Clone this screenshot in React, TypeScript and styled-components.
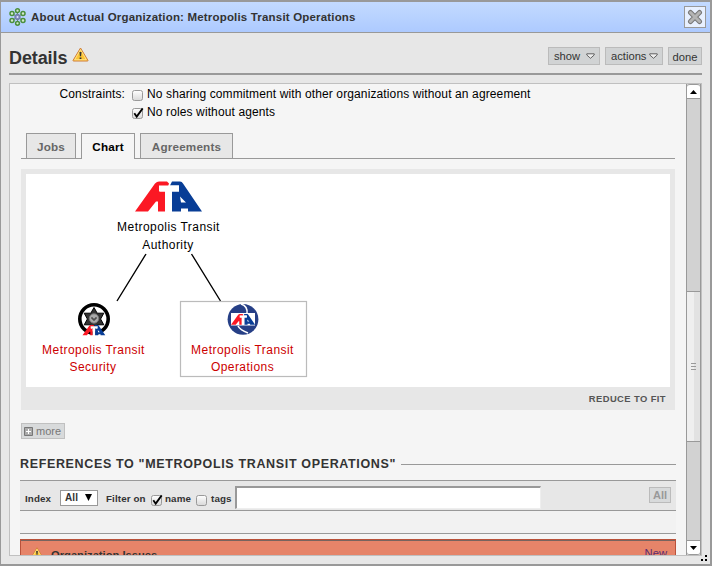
import React from "react";
import styled, { createGlobalStyle, css } from "styled-components";

const Global = createGlobalStyle`
  * { box-sizing: border-box; }
  body { margin: 0; font-family: "Liberation Sans", Arial, sans-serif; font-size: 11.5px; color: #333; }
`;

const Dialog = styled.div`
  width: 712px; height: 566px; background: #e7e7e7; overflow: hidden;
  border: solid #999; border-width: 2px 2px 2px 1px;
  display: flex; flex-direction: column; position: relative;
`;
const TitleBar = styled.header`
  height: 31px; flex: none; display: flex; align-items: center;
  padding: 0 4px 0 8px; gap: 5px; border-bottom: 1px solid #999;
  background: linear-gradient(#c3daff, #adcaff);
`;
const Title = styled.h1`
  margin: 0; flex: 1; font-size: 11.5px; line-height: 14px; letter-spacing: 0.18px; white-space: nowrap; color: #333;
`;
const CloseButton = styled.button`
  width: 22px; height: 22px; padding: 0; border: 1px solid #999; background: #e8f0ff;
  display: grid; place-items: center;
`;
const Heading = styled.div`
  height: 42px; flex: none; margin: 0 8px 0 8px; border-bottom: 2px solid #999;
  display: flex; align-items: flex-start; padding-top: 14px;
`;
const PageTitle = styled.h2`
  margin: 0; font-size: 18px; line-height: 22px; width: 63px; letter-spacing: -0.1px;
`;
const Menu = styled.div`margin-left: auto; display: flex; gap: 5px;`;
const MenuButton = styled.button<{ $w: number }>`
  width: ${p => p.$w}px; height: 18px; padding: 0 4px 0 5px; border: 1px solid #bbb; background: #d1d3d4;
  font: 11.2px/16px "Liberation Sans", sans-serif; color: #333;
  display: flex; align-items: center; justify-content: space-between; white-space: nowrap;
`;
const DoneButton = styled(MenuButton)`justify-content: center; padding: 1px 0 0;`;
const Panel = styled.div`
  margin: 8px 8px 0 8px; height: 473px; flex: none; border: 1px solid #c0c0c0; background: #f5f5f5;
  display: flex;
`;
const Content = styled.main`flex: 1; min-width: 0; height: 471px; overflow: hidden; padding: 1px 9px 0 10px;`;

const Constraints = styled.div`
  display: grid; grid-template-columns: 105px 13px 1fr; column-gap: 7px; grid-auto-rows: 18px;
  color: #000; font-size: 12px; line-height: 18px; letter-spacing: 0.12px;
  margin-bottom: 12px; white-space: nowrap;
`;
const Label = styled.span`text-align: right;`;
const RowText = styled.span`margin-left: -5px;`;
const Box = styled.span<{ $mt?: number }>`
  display: block; width: 13px; height: 13px; flex: none; margin-top: ${p => p.$mt ?? 0}px;
  svg { display: block; overflow: visible; }
`;

const Tabs = styled.nav`
  margin-left: 1px; width: 654px; height: 26px; border-bottom: 1px solid #999;
  display: flex; gap: 5px; padding-left: 5px;
`;
const Tab = styled.div<{ $w: number; $active?: boolean }>`
  width: ${p => p.$w}px; height: 25px; border: 1px solid #999; border-bottom: 0;
  background: #e7e7e7; color: #666; font-weight: bold; font-size: 11.7px; line-height: 25px; text-align: center;
  letter-spacing: 0.18px;
  ${p => p.$active && css`height: 26px; background: #f5f5f5; color: #000;`}
`;
const ChartFrame = styled.section`
  margin: 10px 0 0 1px; width: 654px; height: 241px; padding: 5px; background: #e7e7e7;
  svg { display: block; background: #fff; }
`;
const Reduce = styled.div`
  text-align: right; font-weight: bold; font-size: 9.4px; line-height: 12px; margin-top: 6px; padding-right: 4px; color: #555;
  letter-spacing: 0.42px;
`;
const NodeText = styled.text<{ $red?: boolean }>`
  font: 12px "Liberation Sans", sans-serif; letter-spacing: 0.45px; text-anchor: middle;
  fill: ${p => (p.$red ? "#c00" : "#000")};
`;
const More = styled.button`
  display: flex; align-items: center; gap: 3px; margin: 13px 0 0 1px; width: 44px; height: 16px; padding: 0 2px;
  border: 1px solid #c0c0c0; background: #d8dadb; color: #777; font: 11px/14px "Liberation Sans", sans-serif;
`;
const Section = styled.h3`
  margin: 16px 0 0; height: 18px; width: 656px; display: flex; align-items: center; gap: 5px; white-space: nowrap;
  font-size: 12.5px; letter-spacing: 0.65px; line-height: 18px;
  &::after { content: ""; flex: 1; height: 1px; background: #999; }
`;
const Filter = styled.div`
  margin-top: 7px; width: 656px; height: 31px; border: solid #999; border-width: 1px 0; background: #e7e7e7;
  display: flex; align-items: flex-start; font-size: 9.8px; font-weight: bold; line-height: 12px; letter-spacing: 0.12px;
  padding: 0 5px;
`;
const FilterText = styled.span<{ $w: number; $indent?: number }>`
  width: ${p => p.$w}px; padding-left: ${p => p.$indent ?? 0}px; margin-top: 12px; flex: none; white-space: nowrap;
`;
const Select = styled.div`
  width: 38px; height: 16px; margin: 9px 8px 0 0; border: 1px solid #999; background: #fff; flex: none;
  display: flex; align-items: center; justify-content: space-between; padding: 0 5px 0 4px; font-size: 10px; color: #333;
  svg { margin-top: -2px; }
`;
const Field = styled.input`
  width: 306px; height: 23px; margin-top: 5px; flex: none; background: #fff; outline: 0;
  border: solid; border-width: 2px 1px 1px 2px; border-color: #999 #eee #eee #999;
`;
const AllButton = styled.button`
  margin: 6px 0 0 auto; width: 22px; height: 16px; padding: 0; border: 1px solid #bbb; background: #d8dadb;
  color: #999; font: bold 11px/14px "Liberation Sans", sans-serif;
`;
const Spacer = styled.div`width: 656px; height: 23px; background: #f2f2f2; border-bottom: 1px solid #999;`;
const Issues = styled.div`
  margin-top: 5px; width: 656px; height: 40px; border: 1px solid #b9523b; background: #e68469;
  box-shadow: inset 0 1px #77645f; display: flex; align-items: flex-start; padding: 7px 8px 0 9px;
  font-size: 11.2px; font-weight: bold;
  a { margin-left: auto; color: #5a2a70; font-weight: normal; }
`;
const IssueName = styled.span`margin: 1px 0 0 7px; line-height: 14px;`;

const Scrollbar = styled.div`
  width: 15px; height: 471px; background: #d2d2d2; border: solid #999; border-width: 0 1px; display: flex; flex-direction: column;
`;
const ScrollEnd = styled.div<{ $bottom?: boolean }>`
  height: 15px; background: #fff; display: grid; place-items: center; flex: none;
  border: solid #999; border-width: 1px 0;
  border-radius: ${p => (p.$bottom ? "0 0 3px 3px" : "3px 3px 0 0")};
`;
const Track = styled.div`flex: 1; padding-top: 192px;`;
const Thumb = styled.div`
  height: 151px; border: solid #999; border-width: 1px 0; background: linear-gradient(90deg, #efefef 54%, #e2e2e2 54%);
  display: flex; flex-direction: column; align-items: center; justify-content: center; gap: 2px;
`;
const Grip = styled.i`width: 5px; height: 1px; background: #999;`;
const Resizer = styled.svg`position: absolute; right: 3px; bottom: 3px;`;

const Check = ({ on, mt }: { on?: boolean; mt?: number }) => (
  <Box $mt={mt}>
    <svg width="13" height="13">
      <defs>
        <linearGradient id="cb" x2="0" y2="1"><stop stopColor="#fff" /><stop offset="1" stopColor="#d8d8d8" /></linearGradient>
      </defs>
      <rect x=".5" y="1.5" width="10" height="10" rx="2" fill="url(#cb)" stroke="#999" />
      {on && <path d="M2.3 6.3L4.7 9.6L10.7 1.4" fill="none" stroke="#000" strokeWidth="1.8" />}
    </svg>
  </Box>
);
const Caret = () => (
  <svg width="9" height="6"><path d="M.8 .8H8.2V2L4.5 5.3L.8 2Z" fill="#eee" stroke="#555" strokeWidth=".9" /></svg>
);
const Warning = ({ w = 17 }: { w?: number }) => (
  <svg width={w} height={w * 15 / 17} viewBox="0 0 17 15">
    <path d="M8.5 1L16 13.5Q16 14 15.5 14H1.5Q1 14 1 13.5Z" fill="#ffd45a" stroke="#cf7b35" strokeLinejoin="round" />
    <path d="M8.5 2.7L14.2 12.7H2.8Z" fill="#fbc534" stroke="#ffe99a" strokeWidth=".7" />
    <path d="M7.5 5h2l-.4 4.3h-1.2zM7.6 10.4h1.8v1.6H7.6z" fill="#333" />
  </svg>
);
const AppIcon = () => (
  <svg width="17" height="18" viewBox="0 0 17 18">
    <g stroke="#6a7f78" strokeWidth="1"><path d="M8.5 2.5V15.5M3 5.5L14 12.5M14 5.5L3 12.5" /></g>
    <g fill="#d3e8cf" stroke="#4a8f3c" strokeWidth="1.5">
      <circle cx="8.5" cy="2.7" r="1.9" /><circle cx="3" cy="5.6" r="2" /><circle cx="14" cy="5.6" r="2" />
      <circle cx="3" cy="12.4" r="2" /><circle cx="14" cy="12.4" r="2" /><circle cx="8.5" cy="15.3" r="1.9" />
    </g>
    <circle cx="8.5" cy="9" r="2.7" fill="#8088c0" stroke="#6d7fa0" />
    <circle cx="8.5" cy="9" r="1" fill="#e4e8ff" />
  </svg>
);
const TransitMark = () => (
  <>
    <path fill="#fb1824" d="M0 30L20 2Q22 0 24 0H32L34 2L33 5H25V10H30V30H23V20H21L13 30Z" />
    <path fill="#083d96" d="M37 0H45Q47 0 48 2L67 30H53V27H46V30H37V10H44V4H35Z" />
    <path fill="#fff" d="M24 4H44V10H37V30H30V10H24ZM45 15L51 21H46Z" />
  </>
);

export default function App() {
  return (
    <>
      <Global />
      <Dialog>
        <TitleBar>
          <AppIcon />
          <Title>About Actual Organization: Metropolis Transit Operations</Title>
          <CloseButton aria-label="Close">
            <svg width="16" height="16">
              <path d="M3.5 3.5L12.5 12.5M12.5 3.5L3.5 12.5" stroke="#777" strokeWidth="5" strokeLinecap="round" />
              <path d="M3.5 3.5L12.5 12.5M12.5 3.5L3.5 12.5" stroke="#b4b4b4" strokeWidth="3" strokeLinecap="round" />
            </svg>
          </CloseButton>
        </TitleBar>
        <Heading>
          <PageTitle>Details</PageTitle>
          <Warning />
          <Menu>
            <MenuButton $w={52}>show <Caret /></MenuButton>
            <MenuButton $w={58}>actions <Caret /></MenuButton>
            <DoneButton $w={34}>done</DoneButton>
          </Menu>
        </Heading>
        <Panel>
          <Content>
            <Constraints>
              <Label>Constraints:</Label>
              <Check mt={4} />
              <RowText>No sharing commitment with other organizations without an agreement</RowText>
              <Label />
              <Check on mt={4} />
              <RowText>No roles without agents</RowText>
            </Constraints>
            <Tabs>
              <Tab $w={50}>Jobs</Tab>
              <Tab $w={54} $active>Chart</Tab>
              <Tab $w={93}>Agreements</Tab>
            </Tabs>
            <ChartFrame>
              <svg width="644" height="213" viewBox="26 174 644 213">
                <path d="M146 254L117 301M191.5 254L220.5 301" stroke="#000" strokeWidth="1.4" />
                <g transform="translate(135 181.5)"><TransitMark /></g>
                <NodeText x="168.5" y="231">Metropolis Transit</NodeText>
                <NodeText x="168" y="249">Authority</NodeText>
                <circle cx="94" cy="319" r="14.2" fill="#fff" stroke="#000" strokeWidth="3.6" />
                <path d="M94 307.5L97.2 313.2H103.8L100.6 319L103.8 324.8H97.2L94 330.5L90.8 324.8H84.2L87.4 319L84.2 313.2H90.8Z" fill="#333" stroke="#000" />
                <circle cx="94" cy="318.5" r="4.7" fill="#aaa" stroke="#777" />
                <path d="M91 318h2v2h2v-2h2" fill="none" stroke="#333" />
                <g transform="translate(82.5 325) scale(.34)"><TransitMark /></g>
                <NodeText $red x="93.5" y="354">Metropolis Transit</NodeText>
                <NodeText $red x="93" y="371">Security</NodeText>
                <rect x="180.5" y="301.5" width="126" height="75" fill="#fff" stroke="#bbb" strokeWidth="1.2" />
                <circle cx="243" cy="319.3" r="15.4" fill="#263f86" />
                <path d="M241 304Q248 306 247 314M238 326Q240 330 248 333" fill="none" stroke="#fff" strokeWidth="1.6" />
                <path d="M231 313H255V325.5H231Z" fill="#fff" />
                <g transform="translate(231 314) scale(.36)"><TransitMark /></g>
                <NodeText $red x="242.5" y="354">Metropolis Transit</NodeText>
                <NodeText $red x="242.5" y="371">Operations</NodeText>
              </svg>
              <Reduce>REDUCE TO FIT</Reduce>
            </ChartFrame>
            <More>
              <svg width="9" height="9"><path d="M.5 .5H8.5V8.5H.5Z" fill="#aaa" stroke="#777" /><path d="M4.5 2V7M2 4.5H7" stroke="#fff" /></svg>
              more
            </More>
            <Section>REFERENCES TO "METROPOLIS TRANSIT OPERATIONS"</Section>
            <Filter>
              <FilterText $w={35}>Index</FilterText>
              <Select>All<svg width="7" height="7"><path d="M0 0H7L3.5 7Z" fill="#000" /></svg></Select>
              <FilterText $w={45}>Filter on</FilterText>
              <Check on mt={13} />
              <FilterText $w={32} $indent={1}>name</FilterText>
              <Check mt={13} />
              <FilterText $w={26} $indent={2}>tags</FilterText>
              <Field />
              <AllButton>All</AllButton>
            </Filter>
            <Spacer />
            <Issues>
              <Warning w={14} />
              <IssueName>Organization Issues</IssueName>
              <a>New</a>
            </Issues>
          </Content>
          <Scrollbar>
            <ScrollEnd><svg width="7" height="4"><path d="M0 4L3.5 0L7 4Z" /></svg></ScrollEnd>
            <Track><Thumb><Grip /><Grip /><Grip /></Thumb></Track>
            <ScrollEnd $bottom><svg width="7" height="4"><path d="M0 0H7L3.5 4Z" /></svg></ScrollEnd>
          </Scrollbar>
        </Panel>
        <Resizer width="6" height="6"><path d="M4 0h2v2h-2zM0 4h2v2h-2zM4 4h2v2h-2z" /></Resizer>
      </Dialog>
    </>
  );
}
